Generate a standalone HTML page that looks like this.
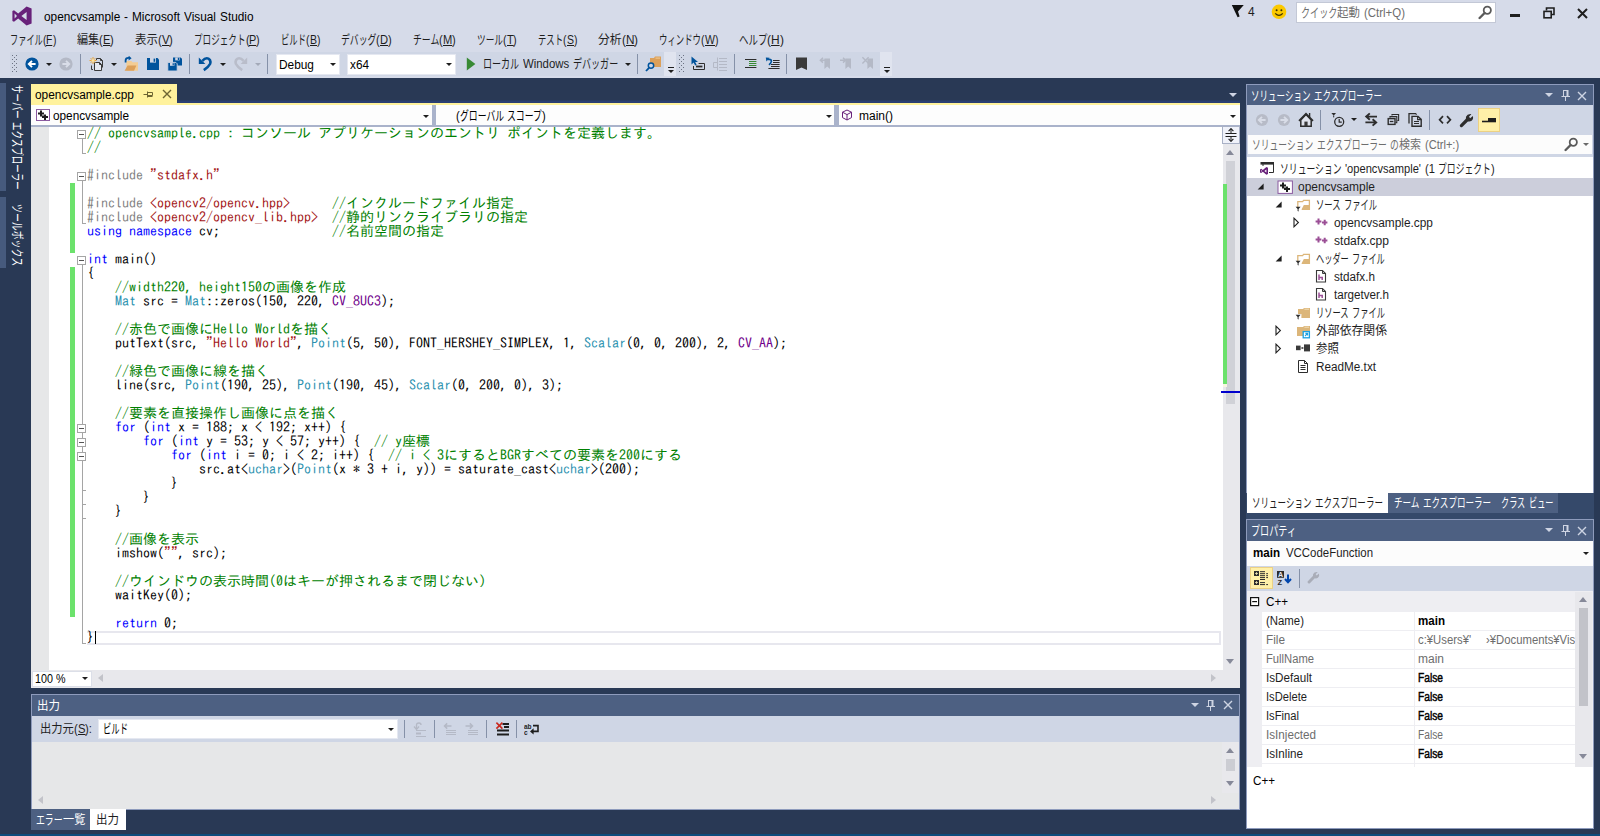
<!DOCTYPE html>
<html lang="ja">
<head>
<meta charset="utf-8">
<title>opencvsample - Microsoft Visual Studio</title>
<style>
*{box-sizing:border-box;margin:0;padding:0}
html,body{width:1600px;height:836px;overflow:hidden}
body{position:relative;background:#d6dbe9;font-family:"Liberation Sans","Noto Sans CJK JP",sans-serif;font-size:12px;color:#1e1e1e}
.abs{position:absolute}
.t{position:absolute;white-space:nowrap;line-height:16px;height:16px}
.f{display:inline-block;white-space:pre}
.r{display:inline-block;transform-origin:0 50%;white-space:pre}
.j{position:relative;top:-.3px;font-size:108%}
.jk{position:relative;top:.3px}
u .r{text-decoration:underline;text-underline-offset:1px}
u{text-decoration:underline;text-underline-offset:1px}
#dark{left:0;top:78px;width:1600px;height:758px;background:#293955}
/* code */
#code{left:87px;top:126px;font-family:"IPAGothic","Liberation Mono",monospace;font-size:14px;line-height:14px;color:#000;white-space:pre}
#code div{height:14px}
.c{color:#008000}.k{color:#0000ff}.s{color:#a31515}.p{color:#808080}.y{color:#2b91af}.m{color:#6f008a}
.hd{background:#4d6082;color:#fff;border:1px solid #8e9bbc;border-bottom:none}
.tri{position:absolute;width:0;height:0;border-left:4px solid transparent;border-right:4px solid transparent;border-top:4px solid #1e1e1e}
.combo{position:absolute;background:#fff;border:1px solid #e5e8f1}
</style>
</head>
<body>
<div id="dark" class="abs"></div>

<!-- TITLE BAR -->
<div id="titlebar">
<svg class="abs" style="left:12px;top:6px" width="20" height="20" viewBox="0 0 20 20"><path d="M14.6 0.4L19.6 2.6V17.4L14.6 19.6L6.2 12.6L2 15.8L0.4 15V5L2 4.2L6.2 7.4Z M14.6 6L9.4 10L14.6 14Z M2.6 7.6V12.4L5 10Z" fill="#68217a" fill-rule="evenodd"/></svg>
<div class="t" style="left:44px;top:9px;font-size:12px;color:#000"><span class="f"><span class="r" style="transform:scaleX(0.985);margin-right:-1.19px">opencvsample</span><span class="r" style="transform:scaleX(1.155);margin-right:0.52px"> </span><span class="r" style="transform:scaleX(0.985);margin-right:-0.06px">-</span><span class="r" style="transform:scaleX(1.155);margin-right:0.52px"> </span><span class="r" style="transform:scaleX(0.985);margin-right:-0.75px">Microsoft</span><span class="r" style="transform:scaleX(1.155);margin-right:0.52px"> </span><span class="r" style="transform:scaleX(0.985);margin-right:-0.50px">Visual</span><span class="r" style="transform:scaleX(1.155);margin-right:0.52px"> </span><span class="r" style="transform:scaleX(0.985);margin-right:-0.52px">Studio</span></span></div>
<svg class="abs" style="left:1231px;top:4px" width="14" height="14" viewBox="0 0 14 14"><path d="M0.8 1H12.8L7 7.4L8.6 12.4L6.6 13.2Z" fill="#111"/></svg>
<div class="t" style="left:1248px;top:4px;color:#1e1e1e">4</div>
<svg class="abs" style="left:1271px;top:4px" width="16" height="16" viewBox="0 0 16 16"><circle cx="8" cy="7.8" r="7.3" fill="#fbc900"/><circle cx="5.6" cy="6.2" r="1" fill="#3b3000"/><circle cx="10.4" cy="6.2" r="1" fill="#3b3000"/><path d="M4.2 9.4Q8 13.4 11.8 9.4" fill="none" stroke="#3b3000" stroke-width="1.2"/></svg>
<div class="abs" style="left:1296px;top:2px;width:200px;height:21px;background:#fff;border:1px solid #c3c8d6"></div>
<div class="t" style="left:1301px;top:5px;color:#6d6d6d"><span class="f"><span class="r j" style="transform:scaleX(0.701);margin-right:-15.49px">クイック</span><span class="r jk" style="transform:scaleX(0.954);margin-right:-1.10px">起動</span><span class="r" style="transform:scaleX(1.120);margin-right:0.40px"> </span><span class="r" style="transform:scaleX(0.954);margin-right:-1.97px">(Ctrl+Q)</span></span></div>
<svg class="abs" style="left:1478px;top:5px" width="15" height="15" viewBox="0 0 15 15"><circle cx="9.3" cy="5.3" r="3.6" fill="none" stroke="#5a5a5a" stroke-width="1.8"/><path d="M6.6 8L1.6 13" stroke="#5a5a5a" stroke-width="2.4" stroke-linecap="round"/></svg>
<div class="abs" style="left:1510px;top:14px;width:10px;height:3px;background:#1e1e1e"></div>
<svg class="abs" style="left:1543px;top:7px" width="12" height="12" viewBox="0 0 12 12"><path d="M3.5 3.5V1H11V7.5H8.5" fill="none" stroke="#1e1e1e" stroke-width="1.6"/><rect x="1" y="4.4" width="7.2" height="6.4" fill="none" stroke="#1e1e1e" stroke-width="1.6"/></svg>
<svg class="abs" style="left:1577px;top:8px" width="11" height="11" viewBox="0 0 11 11"><path d="M1 1L10 10M10 1L1 10" stroke="#1e1e1e" stroke-width="2" fill="none"/></svg>
</div>
<!-- MENU -->
<div id="menu" style="font-size:12px">
<div class="t" style="left:10px;top:32px"><span class="f"><span class="r j" style="transform:scaleX(0.633);margin-right:-19.03px">ファイル</span><span class="r" style="transform:scaleX(0.861);margin-right:-0.55px">(</span><u><span class="r" style="transform:scaleX(0.861);margin-right:-1.02px">F</span></u><span class="r" style="transform:scaleX(0.861);margin-right:-0.55px">)</span></span></div>
<div class="t" style="left:77px;top:32px"><span class="f"><span class="r jk" style="transform:scaleX(0.924);margin-right:-1.82px">編集</span><span class="r" style="transform:scaleX(0.924);margin-right:-0.30px">(</span><u><span class="r" style="transform:scaleX(0.924);margin-right:-0.61px">E</span></u><span class="r" style="transform:scaleX(0.924);margin-right:-0.30px">)</span></span></div>
<div class="t" style="left:135px;top:32px"><span class="f"><span class="r jk" style="transform:scaleX(0.949);margin-right:-1.22px">表示</span><span class="r" style="transform:scaleX(0.949);margin-right:-0.20px">(</span><u><span class="r" style="transform:scaleX(0.949);margin-right:-0.41px">V</span></u><span class="r" style="transform:scaleX(0.949);margin-right:-0.20px">)</span></span></div>
<div class="t" style="left:194px;top:32px"><span class="f"><span class="r j" style="transform:scaleX(0.663);margin-right:-26.18px">プロジェクト</span><span class="r" style="transform:scaleX(0.903);margin-right:-0.39px">(</span><u><span class="r" style="transform:scaleX(0.903);margin-right:-0.78px">P</span></u><span class="r" style="transform:scaleX(0.903);margin-right:-0.39px">)</span></span></div>
<div class="t" style="left:281px;top:32px"><span class="f"><span class="r j" style="transform:scaleX(0.643);margin-right:-13.87px">ビルド</span><span class="r" style="transform:scaleX(0.875);margin-right:-0.50px">(</span><u><span class="r" style="transform:scaleX(0.875);margin-right:-1.00px">B</span></u><span class="r" style="transform:scaleX(0.875);margin-right:-0.50px">)</span></span></div>
<div class="t" style="left:341px;top:32px"><span class="f"><span class="r j" style="transform:scaleX(0.685);margin-right:-16.35px">デバッグ</span><span class="r" style="transform:scaleX(0.932);margin-right:-0.27px">(</span><u><span class="r" style="transform:scaleX(0.932);margin-right:-0.59px">D</span></u><span class="r" style="transform:scaleX(0.932);margin-right:-0.27px">)</span></span></div>
<div class="t" style="left:413px;top:32px"><span class="f"><span class="r j" style="transform:scaleX(0.683);margin-right:-12.21px">チーム</span><span class="r" style="transform:scaleX(0.929);margin-right:-0.28px">(</span><u><span class="r" style="transform:scaleX(0.929);margin-right:-0.71px">M</span></u><span class="r" style="transform:scaleX(0.929);margin-right:-0.28px">)</span></span></div>
<div class="t" style="left:477px;top:32px"><span class="f"><span class="r j" style="transform:scaleX(0.670);margin-right:-12.84px">ツール</span><span class="r" style="transform:scaleX(0.911);margin-right:-0.35px">(</span><u><span class="r" style="transform:scaleX(0.911);margin-right:-0.65px">T</span></u><span class="r" style="transform:scaleX(0.911);margin-right:-0.35px">)</span></span></div>
<div class="t" style="left:538px;top:32px"><span class="f"><span class="r j" style="transform:scaleX(0.643);margin-right:-13.87px">テスト</span><span class="r" style="transform:scaleX(0.875);margin-right:-0.50px">(</span><u><span class="r" style="transform:scaleX(0.875);margin-right:-1.00px">S</span></u><span class="r" style="transform:scaleX(0.875);margin-right:-0.50px">)</span></span></div>
<div class="t" style="left:598px;top:32px"><span class="f"><span class="r jk" style="transform:scaleX(0.983);margin-right:-0.41px">分析</span><span class="r" style="transform:scaleX(0.983);margin-right:-0.07px">(</span><u><span class="r" style="transform:scaleX(0.983);margin-right:-0.15px">N</span></u><span class="r" style="transform:scaleX(0.983);margin-right:-0.07px">)</span></span></div>
<div class="t" style="left:659px;top:32px"><span class="f"><span class="r j" style="transform:scaleX(0.648);margin-right:-22.81px">ウィンドウ</span><span class="r" style="transform:scaleX(0.882);margin-right:-0.47px">(</span><u><span class="r" style="transform:scaleX(0.882);margin-right:-1.34px">W</span></u><span class="r" style="transform:scaleX(0.882);margin-right:-0.47px">)</span></span></div>
<div class="t" style="left:739px;top:32px"><span class="f"><span class="r j" style="transform:scaleX(0.731);margin-right:-10.45px">ヘルプ</span><span class="r" style="transform:scaleX(0.995);margin-right:-0.02px">(</span><u><span class="r" style="transform:scaleX(0.995);margin-right:-0.04px">H</span></u><span class="r" style="transform:scaleX(0.995);margin-right:-0.02px">)</span></span></div>
</div>
<!-- TOOLBAR -->
<div id="toolbar">
<div class="abs" style="left:10px;top:52px;width:654px;height:24px;background:#cfd6e5"></div>
<div class="abs" style="left:676px;top:52px;width:204px;height:24px;background:#cfd6e5"></div>
<svg class="abs" style="left:12px;top:55px" width="6" height="18" viewBox="0 0 6 18"><g fill="#6b7282"><rect x="0" y="0" width="1" height="1"/><rect x="2" y="2" width="1" height="1"/><rect x="4" y="0" width="1" height="1"/><rect x="0" y="4" width="1" height="1"/><rect x="2" y="6" width="1" height="1"/><rect x="4" y="4" width="1" height="1"/><rect x="0" y="8" width="1" height="1"/><rect x="2" y="10" width="1" height="1"/><rect x="4" y="8" width="1" height="1"/><rect x="0" y="12" width="1" height="1"/><rect x="2" y="14" width="1" height="1"/><rect x="4" y="12" width="1" height="1"/><rect x="0" y="16" width="1" height="1"/><rect x="4" y="16" width="1" height="1"/></g></svg>
<!-- back / forward -->
<svg class="abs" style="left:25px;top:57px" width="14" height="14" viewBox="0 0 14 14"><circle cx="7" cy="7" r="6.6" fill="#00539c"/><path d="M10.6 7H4.4M7 3.8L3.8 7L7 10.2" fill="none" stroke="#fff" stroke-width="1.9"/></svg>
<div class="tri" style="left:46px;top:63px;border-width:3px 3px 0 3px;border-style:solid;border-color:#1e1e1e transparent transparent transparent"></div>
<svg class="abs" style="left:59px;top:57px" width="14" height="14" viewBox="0 0 14 14"><circle cx="7" cy="7" r="6.6" fill="#b4b9c6"/><path d="M3.4 7H9.6M7 3.8L10.2 7L7 10.2" fill="none" stroke="#d9dde8" stroke-width="1.9"/></svg>
<div class="abs" style="left:80px;top:54px;width:1px;height:20px;background:#8591a8"></div>
<!-- new project -->
<svg class="abs" style="left:89px;top:55px" width="16" height="18" viewBox="0 0 16 18"><path d="M7.5 5V3.5H11.5L13.5 5.5V12.5" fill="none" stroke="#3a3a3a"/><path d="M11.5 3.5V5.5H13.5" fill="none" stroke="#3a3a3a"/><path d="M5.5 7.5H10.5L12.5 9.5V15.5H5.5Z" fill="#e6e9f2" stroke="#3a3a3a"/><path d="M10.5 7.5V9.5H12.5" fill="none" stroke="#3a3a3a"/><path d="M2.5 10.5V14.5H4" fill="none" stroke="#3a3a3a"/><path d="M4 2V9M0.5 5.5H7.5M1.6 3.1L6.4 7.9M6.4 3.1L1.6 7.9" stroke="#e8a33a" stroke-width="1"/><circle cx="4" cy="5.5" r="1.5" fill="#fbe3a0"/></svg>
<div class="tri" style="left:111px;top:63px;border-width:3px 3px 0 3px;border-style:solid;border-color:#1e1e1e transparent transparent transparent"></div>
<!-- open -->
<svg class="abs" style="left:123px;top:56px" width="16" height="16" viewBox="0 0 16 16"><path d="M3.4 5H8.4L9.4 6.2H15V14.8H3.4Z" fill="#f3cd95"/><path d="M1.6 14.8L4.6 9.4H13.4L11 14.8Z" fill="#dca05a"/><path d="M2.6 6.4V4.6Q2.6 1.8 5.4 1.8H6.4" fill="none" stroke="#00539c" stroke-width="1.8"/><path d="M5.6 -0.4L8.6 2.2L5.6 4.6Z" fill="#00539c"/></svg>
<!-- save -->
<svg class="abs" style="left:146px;top:57px" width="14" height="14" viewBox="0 0 14 14"><path d="M1 1H11.5L13 2.5V13H1Z" fill="#00539c"/><rect x="4" y="1" width="6" height="4.6" fill="#cfd6e5"/><rect x="7.6" y="1.6" width="1.6" height="3.2" fill="#00539c"/></svg>
<!-- save all -->
<svg class="abs" style="left:167px;top:56px" width="16" height="16" viewBox="0 0 16 16"><path d="M6 1.4H13.6L15 2.8V9.6H6Z" fill="#00539c"/><rect x="8.2" y="1.4" width="4.4" height="3" fill="#cfd6e5"/><rect x="10.8" y="1.8" width="1.2" height="2.2" fill="#00539c"/><path d="M0.8 6.4H8.8L10.2 7.8V15H0.8Z" fill="#00539c" stroke="#cfd6e5" stroke-width=".9"/><rect x="3" y="6.8" width="4.4" height="3" fill="#cfd6e5"/><rect x="5.6" y="7.2" width="1.2" height="2.2" fill="#00539c"/></svg>
<div class="abs" style="left:189px;top:54px;width:1px;height:20px;background:#8591a8"></div>
<!-- undo -->
<svg class="abs" style="left:197px;top:56px" width="16" height="16" viewBox="0 0 16 16"><path d="M5.4 4.8Q8.4 1.4 11.4 2.6Q14.4 4.2 13 8Q11.4 11.2 6.8 14.2" fill="none" stroke="#00539c" stroke-width="2.6"/><path d="M1.8 1.4V8H8.4Z" fill="#00539c"/></svg>
<div class="tri" style="left:220px;top:63px;border-width:3px 3px 0 3px;border-style:solid;border-color:#1e1e1e transparent transparent transparent"></div>
<!-- redo -->
<svg class="abs" style="left:233px;top:56px" width="16" height="16" viewBox="0 0 16 16"><path d="M10.6 4.8Q7.6 1.4 4.6 2.6Q1.6 4.2 3 8Q4.6 11.2 9.2 14.2" fill="none" stroke="#b9bdca" stroke-width="2.6"/><path d="M14.2 1.4V8H7.6Z" fill="#b9bdca"/></svg>
<div class="tri" style="left:255px;top:63px;border-width:3px 3px 0 3px;border-style:solid;border-color:#a3a9b8 transparent transparent transparent"></div>
<div class="abs" style="left:267px;top:54px;width:1px;height:20px;background:#8591a8"></div>
<!-- combos -->
<div class="combo" style="left:276px;top:54px;width:64px;height:21px"></div>
<div class="t" style="left:279px;top:57px;color:#000"><span class="f"><span class="r" style="transform:scaleX(0.989);margin-right:-0.37px">Debug</span></span></div>
<div class="tri" style="left:330px;top:63px;border-width:3px 3px 0 3px;border-style:solid;border-color:#1e1e1e transparent transparent transparent"></div>
<div class="combo" style="left:347px;top:54px;width:109px;height:21px"></div>
<div class="t" style="left:350px;top:57px;color:#000"><span class="f"><span class="r" style="transform:scaleX(0.981);margin-right:-0.36px">x64</span></span></div>
<div class="tri" style="left:446px;top:63px;border-width:3px 3px 0 3px;border-style:solid;border-color:#1e1e1e transparent transparent transparent"></div>
<!-- start -->
<svg class="abs" style="left:466px;top:57px" width="10" height="14" viewBox="0 0 10 14"><path d="M0.8 0.6L9.4 7L0.8 13.4Z" fill="#388a34"/></svg>
<div class="t" style="left:483px;top:56px;color:#1e1e1e"><span class="f"><span class="r j" style="transform:scaleX(0.698);margin-right:-15.67px">ローカル</span><span class="r" style="transform:scaleX(1.114);margin-right:0.38px"> </span><span class="r" style="transform:scaleX(0.949);margin-right:-2.46px">Windows</span><span class="r" style="transform:scaleX(1.114);margin-right:0.38px"> </span><span class="r j" style="transform:scaleX(0.698);margin-right:-19.59px">デバッガー</span></span></div>
<div class="tri" style="left:625px;top:63px;border-width:3px 3px 0 3px;border-style:solid;border-color:#1e1e1e transparent transparent transparent"></div>
<div class="abs" style="left:637px;top:54px;width:1px;height:20px;background:#8591a8"></div>
<!-- find in files -->
<svg class="abs" style="left:645px;top:55px" width="17" height="18" viewBox="0 0 17 18"><path d="M5 3H9L10 1.6H16V12H5Z" fill="#dca05a"/><rect x="10.5" y="2.6" width="4.5" height="1" fill="#f3cd95"/><circle cx="6" cy="10.6" r="2.7" fill="#cfd6e5" stroke="#00539c" stroke-width="1.5"/><path d="M4 12.8L1 16" stroke="#00539c" stroke-width="1.8"/></svg>
<!-- overflow 1 -->
<div class="abs" style="left:664px;top:52px;width:12px;height:24px;background:#e0e4ef"></div>
<div class="abs" style="left:668px;top:66.5px;width:6px;height:1.6px;background:#1e1e1e"></div>
<div class="tri" style="left:668px;top:70px;border-width:3px 3px 0 3px;border-style:solid;border-color:#1e1e1e transparent transparent transparent"></div>
<!-- toolbar 2 -->
<svg class="abs" style="left:679px;top:55px" width="6" height="18" viewBox="0 0 6 18"><g fill="#6b7282"><rect x="0" y="0" width="1" height="1"/><rect x="2" y="2" width="1" height="1"/><rect x="4" y="0" width="1" height="1"/><rect x="0" y="4" width="1" height="1"/><rect x="2" y="6" width="1" height="1"/><rect x="4" y="4" width="1" height="1"/><rect x="0" y="8" width="1" height="1"/><rect x="2" y="10" width="1" height="1"/><rect x="4" y="8" width="1" height="1"/><rect x="0" y="12" width="1" height="1"/><rect x="2" y="14" width="1" height="1"/><rect x="4" y="12" width="1" height="1"/><rect x="0" y="16" width="1" height="1"/><rect x="4" y="16" width="1" height="1"/></g></svg>
<svg class="abs" style="left:690px;top:56px" width="16" height="16" viewBox="0 0 16 16"><path d="M1.5 0.5V8.6L3.6 6.6L5.2 9.6L6.6 8.8L5.2 6H8Z" fill="#00539c"/><path d="M3.5 10V13.5H14.5V7.5H8.6" fill="none" stroke="#2d2d2d"/><rect x="6" y="9.6" width="6.4" height="1.8" fill="#2d2d2d"/></svg>
<svg class="abs" style="left:712px;top:56px" width="16" height="16" viewBox="0 0 16 16"><g fill="none" stroke="#b4b9c6"><path d="M5.5 6.5H1.5V11.5H5.5M5.5 1.5V14.5"/><path d="M7 2.5H15M7 5.5H15M7 8.5H15M7 11.5H15M7 14.5H15"/></g></svg>
<div class="abs" style="left:734px;top:54px;width:1px;height:20px;background:#8591a8"></div>
<svg class="abs" style="left:744px;top:57px" width="14" height="14" viewBox="0 0 14 14"><path d="M1 2.5H12.4M1 10.5H12.4" stroke="#2d2d2d" stroke-width="1.1"/><path d="M5 4.5H12.4M5 6.5H12.4M5 8.5H12.4" stroke="#388a34" stroke-width="1.1"/></svg>
<svg class="abs" style="left:765px;top:55px" width="16" height="18" viewBox="0 0 16 18"><path d="M8 5.5H14.6M8 7.5H14.6M6 9.5H14.6M6 11.5H14.6M3.4 13.5H14.6" stroke="#2d2d2d" stroke-width="1.1"/><path d="M2.6 4.4H4.4Q6.4 4.4 6.4 6.2Q6.4 7.6 4 9.8" fill="none" stroke="#00539c" stroke-width="1.6"/><path d="M0.8 2.4L4.6 2.8L1.4 6.4Z" fill="#00539c"/></svg>
<div class="abs" style="left:786px;top:54px;width:1px;height:20px;background:#8591a8"></div>
<svg class="abs" style="left:796px;top:57px" width="12" height="14" viewBox="0 0 12 14"><path d="M0 0.4H11V13L5.5 10.4L0 13Z" fill="#3a3a3a"/></svg>
<svg class="abs" style="left:818px;top:56px" width="14" height="15" viewBox="0 0 14 15"><path d="M6.4 2.6H12V13L9.2 10.6L6.4 13Z" fill="#b4b9c6"/><path d="M8 4.2H3M5 1.8L2.4 4.2L5 6.6" fill="none" stroke="#b4b9c6" stroke-width="1.5"/></svg>
<svg class="abs" style="left:839px;top:56px" width="14" height="15" viewBox="0 0 14 15"><path d="M6.4 2.6H12V13L9.2 10.6L6.4 13Z" fill="#b4b9c6"/><path d="M1 4.2H6M4 1.8L6.6 4.2L4 6.6" fill="none" stroke="#b4b9c6" stroke-width="1.5"/></svg>
<svg class="abs" style="left:861px;top:56px" width="14" height="15" viewBox="0 0 14 15"><path d="M6.4 2.6H12V13L9.2 10.6L6.4 13Z" fill="#b4b9c6"/><path d="M1.4 1.2L7.6 7.4M7.6 1.2L1.4 7.4" fill="none" stroke="#b4b9c6" stroke-width="1.4"/></svg>
<div class="abs" style="left:880px;top:52px;width:12px;height:24px;background:#e0e4ef"></div>
<div class="abs" style="left:884px;top:66.5px;width:6px;height:1.6px;background:#1e1e1e"></div>
<div class="tri" style="left:884px;top:70px;border-width:3px 3px 0 3px;border-style:solid;border-color:#1e1e1e transparent transparent transparent"></div>
</div>
<!-- LEFT STRIP -->
<div id="leftstrip">
<div class="abs" style="left:0;top:83px;width:6px;height:108px;background:#465a7d"></div>
<div class="abs" style="left:0;top:197px;width:6px;height:71px;background:#465a7d"></div>
<div class="t" style="left:25px;top:85px;color:#fff;transform-origin:0 0;transform:rotate(90deg)"><span class="f"><span class="r j" style="transform:scaleX(0.655);margin-right:-17.83px">サーバー</span><span class="r" style="transform:scaleX(1.046);margin-right:0.16px"> </span><span class="r j" style="transform:scaleX(0.655);margin-right:-35.61px">エクスプローラー</span></span></div>
<div class="t" style="left:25px;top:204px;color:#fff;transform-origin:0 0;transform:rotate(90deg)"><span class="f"><span class="r j" style="transform:scaleX(0.687);margin-right:-28.30px">ツールボックス</span></span></div>
</div>
<div id="editor">
<!-- doc tab -->
<div class="abs" style="left:31px;top:100.2px;width:1209px;height:3px;background:linear-gradient(#293955,#2a3f72 40%)"></div>
<div class="abs" style="left:31px;top:84px;width:146px;height:20px;background:#fff29d"></div>
<div class="t" style="left:35px;top:87px;color:#000"><span class="f"><span class="r" style="transform:scaleX(0.989);margin-right:-1.06px">opencvsample.cpp</span></span></div>
<svg class="abs" style="left:143px;top:90px" width="10" height="10" viewBox="0 0 10 10"><path d="M0.5 4.5H4 M4.5 1.5V7.5 M4.5 2.5H9.5V5.5H4.5 M4.5 6.5H9.5" fill="none" stroke="#6d6532" stroke-width="1"/></svg>
<svg class="abs" style="left:162px;top:89px" width="10" height="10" viewBox="0 0 10 10"><path d="M1 1L9 9M9 1L1 9" fill="none" stroke="#6d6532" stroke-width="1.4"/></svg>
<div class="abs" style="left:31px;top:103px;width:1209px;height:2.4px;background:#fff29d"></div>
<div class="tri" style="left:1229px;top:93px;border-top-color:#ced4e3"></div>
<!-- nav bar -->
<div class="abs" style="left:31px;top:105.4px;width:1209px;height:21.4px;background:#aab3cb"></div>
<div class="abs" style="left:31px;top:105.4px;width:400.8px;height:19.9px;background:#fdfdfd"></div>
<div class="abs" style="left:435.8px;top:105.4px;width:398.7px;height:19.9px;background:#fdfdfd"></div>
<div class="abs" style="left:838.5px;top:105.4px;width:401.5px;height:19.9px;background:#fdfdfd"></div>
<svg class="abs" style="left:36px;top:109px" width="14" height="12" viewBox="0 0 14 12"><rect x=".5" y=".5" width="13" height="11" fill="#fff" stroke="#8a5aa0"/><path d="M2 3.4h2v-2h2v2h2v2h-2v2h-2v-2h-2z M6 6.4h2v-1h2v1.6h2v2h-2v2h-2v-2h-2z" fill="#1e1e1e"/></svg>
<div class="t" style="left:53px;top:108px;color:#000"><span class="f"><span class="r" style="transform:scaleX(0.982);margin-right:-1.39px">opencvsample</span></span></div>
<div class="tri" style="left:423px;top:115px;border-width:3px 3px 0 3px;border-style:solid;border-color:#1e1e1e transparent transparent transparent"></div>
<div class="t" style="left:456px;top:108px;color:#000"><span class="f"><span class="r" style="transform:scaleX(0.929);margin-right:-0.29px">(</span><span class="r j" style="transform:scaleX(0.682);margin-right:-20.54px">グローバル</span><span class="r" style="transform:scaleX(1.090);margin-right:0.30px"> </span><span class="r j" style="transform:scaleX(0.682);margin-right:-16.22px">スコープ</span><span class="r" style="transform:scaleX(0.929);margin-right:-0.29px">)</span></span></div>
<div class="tri" style="left:826px;top:115px;border-width:3px 3px 0 3px;border-style:solid;border-color:#1e1e1e transparent transparent transparent"></div>
<svg class="abs" style="left:841px;top:109px" width="12" height="12" viewBox="0 0 12 12"><path d="M6 1L10.5 3.2V8.6L6 11L1.5 8.6V3.2Z M1.5 3.2L6 5.6L10.5 3.2 M6 5.6V11" fill="none" stroke="#68217a" stroke-width="1"/></svg>
<div class="t" style="left:859px;top:108px;color:#000"><span class="f"><span class="r" style="transform:scaleX(1.000);margin-right:-0.02px">main()</span></span></div>
<div class="tri" style="left:1230px;top:115px;border-width:3px 3px 0 3px;border-style:solid;border-color:#1e1e1e transparent transparent transparent"></div>
<!-- text area -->
<div class="abs" style="left:31px;top:126.8px;width:1192px;height:543.2px;background:#fff"></div>
<div class="abs" style="left:31px;top:126.8px;width:18px;height:543.2px;background:#e6e7e8"></div>
<!-- change bars -->
<div class="abs" style="left:70px;top:182.5px;width:4.6px;height:70px;background:#6ce26c"></div>
<div class="abs" style="left:70px;top:266.7px;width:4.6px;height:350.5px;background:#6ce26c"></div>
<!-- current line -->
<div class="abs" style="left:87px;top:630.6px;width:1134px;height:14.4px;border-top:2px solid #e7e7ee;border-bottom:2px solid #e7e7ee;border-right:2px solid #e7e7ee"></div>
<div id="outl"><div class="abs" style="left:82px;top:139px;width:1px;height:15px;background:#a5a5a5"></div><div class="abs" style="left:82px;top:153px;width:4px;height:1px;background:#a5a5a5"></div><div class="abs" style="left:77px;top:130px;width:9px;height:9px;background:#fff;border:1px solid #a5a5a5"></div><div class="abs" style="left:79px;top:134px;width:5px;height:1px;background:#555"></div><div class="abs" style="left:82px;top:181px;width:1px;height:43px;background:#a5a5a5"></div><div class="abs" style="left:82px;top:223px;width:4px;height:1px;background:#a5a5a5"></div><div class="abs" style="left:77px;top:172px;width:9px;height:9px;background:#fff;border:1px solid #a5a5a5"></div><div class="abs" style="left:79px;top:176px;width:5px;height:1px;background:#555"></div><div class="abs" style="left:82px;top:265px;width:1px;height:379px;background:#a5a5a5"></div><div class="abs" style="left:82px;top:643px;width:4px;height:1px;background:#a5a5a5"></div><div class="abs" style="left:77px;top:256px;width:9px;height:9px;background:#fff;border:1px solid #a5a5a5"></div><div class="abs" style="left:79px;top:260px;width:5px;height:1px;background:#555"></div><div class="abs" style="left:77px;top:424px;width:9px;height:9px;background:#fff;border:1px solid #a5a5a5"></div><div class="abs" style="left:79px;top:428px;width:5px;height:1px;background:#555"></div><div class="abs" style="left:77px;top:438px;width:9px;height:9px;background:#fff;border:1px solid #a5a5a5"></div><div class="abs" style="left:79px;top:442px;width:5px;height:1px;background:#555"></div><div class="abs" style="left:77px;top:452px;width:9px;height:9px;background:#fff;border:1px solid #a5a5a5"></div><div class="abs" style="left:79px;top:456px;width:5px;height:1px;background:#555"></div><div class="abs" style="left:82px;top:490px;width:4px;height:1px;background:#a5a5a5"></div><div class="abs" style="left:82px;top:504px;width:4px;height:1px;background:#a5a5a5"></div><div class="abs" style="left:82px;top:518px;width:4px;height:1px;background:#a5a5a5"></div></div>
<div id="code" class="abs"><div><span class="c">// opencvsample.cpp : コンソール アプリケーションのエントリ ポイントを定義します。</span></div><div><span class="c">//</span></div><div></div><div><span class="p">#include</span> <span class="s">"stdafx.h"</span></div><div></div><div><span class="p">#include</span> <span class="s">&lt;opencv2/opencv.hpp&gt;</span>      <span class="c">//インクルードファイル指定</span></div><div><span class="p">#include</span> <span class="s">&lt;opencv2/opencv_lib.hpp&gt;</span>  <span class="c">//静的リンクライブラリの指定</span></div><div><span class="k">using</span> <span class="k">namespace</span> cv;                <span class="c">//名前空間の指定</span></div><div></div><div><span class="k">int</span> main()</div><div>{</div><div>    <span class="c">//width220, height150の画像を作成</span></div><div>    <span class="y">Mat</span> src = <span class="y">Mat</span>::zeros(150, 220, <span class="m">CV_8UC3</span>);</div><div></div><div>    <span class="c">//赤色で画像にHello Worldを描く</span></div><div>    putText(src, <span class="s">"Hello World"</span>, <span class="y">Point</span>(5, 50), FONT_HERSHEY_SIMPLEX, 1, <span class="y">Scalar</span>(0, 0, 200), 2, <span class="m">CV_AA</span>);</div><div></div><div>    <span class="c">//緑色で画像に線を描く</span></div><div>    line(src, <span class="y">Point</span>(190, 25), <span class="y">Point</span>(190, 45), <span class="y">Scalar</span>(0, 200, 0), 3);</div><div></div><div>    <span class="c">//要素を直接操作し画像に点を描く</span></div><div>    <span class="k">for</span> (<span class="k">int</span> x = 188; x &lt; 192; x++) {</div><div>        <span class="k">for</span> (<span class="k">int</span> y = 53; y &lt; 57; y++) {  <span class="c">// y座標</span></div><div>            <span class="k">for</span> (<span class="k">int</span> i = 0; i &lt; 2; i++) {  <span class="c">// i &lt; 3にするとBGRすべての要素を200にする</span></div><div>                src.at&lt;<span class="y">uchar</span>&gt;(<span class="y">Point</span>(x * 3 + i, y)) = saturate_cast&lt;<span class="y">uchar</span>&gt;(200);</div><div>            }</div><div>        }</div><div>    }</div><div></div><div>    <span class="c">//画像を表示</span></div><div>    imshow(<span class="s">""</span>, src);</div><div></div><div>    <span class="c">//ウインドウの表示時間(0はキーが押されるまで閉じない)</span></div><div>    waitKey(0);</div><div></div><div>    <span class="k">return</span> 0;</div><div>}</div></div>
<div class="abs" style="left:95px;top:631px;width:1px;height:13px;background:#000"></div>
<!-- v scrollbar -->
<div class="abs" style="left:1223px;top:126px;width:17px;height:544px;background:#e8e8ec"></div>
<div id="vsb">
<div class="abs" style="left:1222px;top:126px;width:18px;height:18px;background:#f0f2fa;border:1px solid #a9b1c6"></div>
<svg class="abs" style="left:1225px;top:128px" width="12" height="14" viewBox="0 0 12 14"><path d="M0.5 5.5H11.5M0.5 8.5H11.5" stroke="#1e1e1e" stroke-width="1"/><path d="M6 1V5M6 9V13" stroke="#1e1e1e" stroke-width="1"/><path d="M3.6 3.2L6 0.6L8.4 3.2M3.6 10.8L6 13.4L8.4 10.8" fill="none" stroke="#1e1e1e" stroke-width="1.1"/></svg>
<div class="tri" style="left:1226px;top:150px;border-width:0 4.5px 5px 4.5px;border-style:solid;border-color:transparent transparent #868999 transparent"></div>
<div class="abs" style="left:1226px;top:161px;width:9px;height:243px;background:#d0d1d7"></div>
<div class="abs" style="left:1223px;top:184px;width:4px;height:200px;background:#6ce26c"></div>
<div class="abs" style="left:1223px;top:384px;width:4px;height:3px;background:#f6f6e0"></div>
<div class="abs" style="left:1221px;top:391px;width:19px;height:2px;background:#0000cd"></div>
<div class="tri" style="left:1226px;top:659px;border-width:5px 4.5px 0 4.5px;border-style:solid;border-color:#868999 transparent transparent transparent"></div>
</div>
<!-- h scrollbar -->
<div class="abs" style="left:31px;top:670px;width:1209px;height:18px;background:#e8e8ec"></div>
<div id="hsb">
<div class="abs" style="left:32px;top:671px;width:60px;height:16px;background:#fff;border:1px solid #dcdfe8"></div>
<div class="t" style="left:35px;top:671px;color:#000"><span class="f"><span class="r" style="transform:scaleX(0.895);margin-right:-2.10px">100</span><span class="r" style="transform:scaleX(1.051);margin-right:0.17px"> </span><span class="r" style="transform:scaleX(0.895);margin-right:-1.12px">%</span></span></div>
<div class="tri" style="left:82px;top:677px;border-width:3px 3px 0 3px;border-style:solid;border-color:#1e1e1e transparent transparent transparent"></div>
<div class="tri" style="left:98px;top:674px;border-width:4.5px 5px 4.5px 0;border-style:solid;border-color:transparent #c2c3c9 transparent transparent"></div>
<div class="tri" style="left:1211px;top:674px;border-width:4.5px 0 4.5px 5px;border-style:solid;border-color:transparent transparent transparent #c2c3c9"></div>
</div>
</div>
<!-- OUTPUT -->
<div id="output">
<div class="abs" style="left:31px;top:694px;width:1209px;height:116px;background:#e6e7e8;border:1px solid #8e9bbc"></div>
<div class="abs" style="left:32px;top:695px;width:1207px;height:21px;background:#4d6082"></div>
<div class="t" style="left:37px;top:698px;color:#fff"><span class="f"><span class="r jk" style="transform:scaleX(0.958);margin-right:-1.02px">出力</span></span></div>
<div class="tri" style="left:1191px;top:703px;border-width:4px 4px 0 4px;border-style:solid;border-color:#ced4e3 transparent transparent transparent"></div>
<svg class="abs" style="left:1206px;top:699px" width="10" height="12" viewBox="0 0 10 12"><path d="M2.5 1V8M2.5 1.5H7M0.5 7.5H9M4.5 8V12" fill="none" stroke="#ced4e3" stroke-width="1"/><path d="M6.5 1V8" stroke="#ced4e3" stroke-width="2"/></svg>
<svg class="abs" style="left:1223px;top:700px" width="10" height="10" viewBox="0 0 10 10"><path d="M1 1L9 9M9 1L1 9" fill="none" stroke="#ced4e3" stroke-width="1.4"/></svg>
<div class="abs" style="left:32px;top:716px;width:1207px;height:26px;background:#cfd6e5"></div>
<div class="t" style="left:40px;top:721px;color:#1e1e1e"><span class="f"><span class="r jk" style="transform:scaleX(0.939);margin-right:-2.20px">出力元</span><span class="r" style="transform:scaleX(0.939);margin-right:-0.24px">(</span><u><span class="r" style="transform:scaleX(0.939);margin-right:-0.49px">S</span></u><span class="r" style="transform:scaleX(0.939);margin-right:-0.45px">):</span></span></div>
<div class="combo" style="left:98px;top:719px;width:300px;height:20px"></div>
<div class="t" style="left:103px;top:721px;color:#000"><span class="f"><span class="r j" style="transform:scaleX(0.643);margin-right:-13.86px">ビルド</span></span></div>
<div class="tri" style="left:388px;top:728px;border-width:3px 3px 0 3px;border-style:solid;border-color:#1e1e1e transparent transparent transparent"></div>
<div class="abs" style="left:404px;top:720px;width:1px;height:18px;background:#8591a8"></div>
<svg class="abs" style="left:412px;top:721px" width="16" height="16" viewBox="0 0 16 16"><g fill="none" stroke="#b4b9c6"><path d="M4.5 8V4.5Q4.5 2 7 2Q9 2 9 4" stroke-width="1.4"/><path d="M2 5.5L4.5 8.5L7 5.5" stroke-width="1.2"/><path d="M4 9.5H14M4 15.5H14"/><path d="M4 12.5H9" stroke-width="2"/></g></svg>
<div class="abs" style="left:434px;top:720px;width:1px;height:18px;background:#8591a8"></div>
<svg class="abs" style="left:443px;top:722px" width="14" height="14" viewBox="0 0 14 14"><g fill="none" stroke="#b4b9c6"><path d="M1.5 4H8.5M4.2 1.4L1.5 4L4.2 6.6" stroke-width="1.5"/><path d="M3 8.5H13M3 10.5H13M3 12.5H13"/></g></svg>
<svg class="abs" style="left:465px;top:722px" width="14" height="14" viewBox="0 0 14 14"><g fill="none" stroke="#b4b9c6"><path d="M0.5 4H7.5M4.8 1.4L7.5 4L4.8 6.6" stroke-width="1.5"/><path d="M3 8.5H13M3 10.5H13M3 12.5H13"/></g></svg>
<div class="abs" style="left:486px;top:720px;width:1px;height:18px;background:#8591a8"></div>
<svg class="abs" style="left:495px;top:721px" width="15" height="16" viewBox="0 0 15 16"><path d="M7.5 3H14M9 6H14M2 9.5H14M2 13.5H14" stroke="#1e1e1e" stroke-width="1.8"/><path d="M1.4 1.6L7.4 7.6M7.4 1.6L1.4 7.6" stroke="#c8281e" stroke-width="1.6"/></svg>
<div class="abs" style="left:516px;top:720px;width:1px;height:18px;background:#8591a8"></div>
<svg class="abs" style="left:524px;top:723px" width="16" height="13" viewBox="0 0 16 13"><text x="0" y="5.5" font-family="Liberation Sans, sans-serif" font-size="6.5" font-weight="bold" fill="#1e1e1e">ab</text><text x="0" y="11.5" font-family="Liberation Sans, sans-serif" font-size="6.5" font-weight="bold" fill="#1e1e1e">c</text><path d="M9 2.6H14V8.4H8" fill="none" stroke="#1e1e1e" stroke-width="1.6"/><path d="M6 8.4L9.6 5.2V11.6Z" fill="#1e1e1e"/></svg>
<!-- output scrollbars -->
<div class="abs" style="left:1222px;top:742px;width:17px;height:51px;background:#e8e8ec"></div>
<div class="tri" style="left:1226px;top:748px;border-width:0 4.5px 5px 4.5px;border-style:solid;border-color:transparent transparent #868999 transparent"></div>
<div class="abs" style="left:1226px;top:759px;width:9px;height:12px;background:#cccdd3"></div>
<div class="tri" style="left:1226px;top:781px;border-width:5px 4.5px 0 4.5px;border-style:solid;border-color:#868999 transparent transparent transparent"></div>
<div class="tri" style="left:38px;top:796px;border-width:4.5px 5px 4.5px 0;border-style:solid;border-color:transparent #c2c3c9 transparent transparent"></div>
<div class="tri" style="left:1211px;top:796px;border-width:4.5px 0 4.5px 5px;border-style:solid;border-color:transparent transparent transparent #c2c3c9"></div>
<!-- bottom tabs -->
<div class="abs" style="left:31px;top:809px;width:59px;height:20.5px;background:#4d6082"></div>
<div class="abs" style="left:0;top:834px;width:1600px;height:2px;background:#0e4c7c"></div>
<div class="t" style="left:36px;top:812px;color:#fff"><span class="f"><span class="r j" style="transform:scaleX(0.685);margin-right:-12.25px">エラー</span><span class="r jk" style="transform:scaleX(0.932);margin-right:-1.63px">一覧</span></span></div>
<div class="abs" style="left:90px;top:809px;width:36px;height:20.5px;background:#fff"></div>
<div class="t" style="left:96px;top:812px;color:#1e1e1e"><span class="f"><span class="r jk" style="transform:scaleX(0.958);margin-right:-1.02px">出力</span></span></div>
</div>
<!-- SOLUTION EXPLORER -->
<div id="solexp">
<div class="abs" style="left:1246px;top:84px;width:348px;height:409px;background:#fff;border:1px solid #8e9bbc;border-bottom:none"></div>
<div class="abs" style="left:1247px;top:85px;width:346px;height:20px;background:#4d6082"></div>
<div class="t" style="left:1251px;top:88px;color:#fff"><span class="f"><span class="r j" style="transform:scaleX(0.658);margin-right:-30.90px">ソリューション</span><span class="r" style="transform:scaleX(1.051);margin-right:0.17px"> </span><span class="r j" style="transform:scaleX(0.658);margin-right:-35.29px">エクスプローラー</span></span></div>
<div class="tri" style="left:1545px;top:93px;border-width:4px 4px 0 4px;border-style:solid;border-color:#ced4e3 transparent transparent transparent"></div>
<svg class="abs" style="left:1561px;top:89px" width="10" height="12" viewBox="0 0 10 12"><path d="M2.5 1V8M2.5 1.5H7M0.5 7.5H9M4.5 8V12" fill="none" stroke="#ced4e3" stroke-width="1"/><path d="M6.5 1V8" stroke="#ced4e3" stroke-width="2"/></svg>
<svg class="abs" style="left:1577px;top:91px" width="10" height="10" viewBox="0 0 10 10"><path d="M1 1L9 9M9 1L1 9" fill="none" stroke="#ced4e3" stroke-width="1.4"/></svg>
<!-- toolbar -->
<div class="abs" style="left:1247px;top:105px;width:346px;height:52px;background:#cfd6e5"></div>
<svg class="abs" style="left:1255px;top:113px" width="14" height="14" viewBox="0 0 14 14"><circle cx="7" cy="7" r="6.1" fill="#b7bbc7"/><path d="M10.6 7H4.4M7 3.8L3.8 7L7 10.2" fill="none" stroke="#d9dde8" stroke-width="1.9"/></svg>
<svg class="abs" style="left:1277px;top:113px" width="14" height="14" viewBox="0 0 14 14"><circle cx="7" cy="7" r="6.1" fill="#b7bbc7"/><path d="M3.4 7H9.6M7 3.8L10.2 7L7 10.2" fill="none" stroke="#d9dde8" stroke-width="1.9"/></svg>
<svg class="abs" style="left:1298px;top:112px" width="16" height="16" viewBox="0 0 16 16"><path d="M2.8 8V14.2H13.2V8L8 2.6Z" fill="#e0e3ec" stroke="#2d2d2d" stroke-width="1.5"/><path d="M1 8.8L8 1.6L15 8.8" fill="none" stroke="#2d2d2d" stroke-width="1.7"/><path d="M11.6 1V5" stroke="#2d2d2d" stroke-width="1.4"/><rect x="6.4" y="9.6" width="3.2" height="4.8" fill="#3a3a3a"/></svg>
<div class="abs" style="left:1320px;top:110px;width:1px;height:20px;background:#8591a8"></div>
<svg class="abs" style="left:1330px;top:111px" width="16" height="17" viewBox="0 0 16 17"><circle cx="9.2" cy="10.8" r="4.5" fill="none" stroke="#2d2d2d" stroke-width="1.3"/><path d="M9.2 8V11.2H11.8" fill="none" stroke="#2d2d2d" stroke-width="1.2"/><path d="M1.4 2H6L3.7 4.8Z" fill="#2d2d2d"/><path d="M3.7 4.6V6.4" stroke="#2d2d2d" stroke-width="1"/></svg>
<div class="tri" style="left:1351px;top:118px;border-width:3px 3px 0 3px;border-style:solid;border-color:#1e1e1e transparent transparent transparent"></div>
<svg class="abs" style="left:1364px;top:112px" width="14" height="15" viewBox="0 0 14 15"><path d="M13 4.6H3M5.8 1.4L2.2 4.6L5.8 7.8" fill="none" stroke="#2d2d2d" stroke-width="1.9"/><path d="M1.4 10.4H11.4M8.6 7.2L12.2 10.4L8.6 13.6" fill="none" stroke="#2d2d2d" stroke-width="1.9"/></svg>
<svg class="abs" style="left:1387px;top:113px" width="14" height="14" viewBox="0 0 14 14"><path d="M5 2.6V1.5H11.6V7.5H10.4" fill="none" stroke="#2d2d2d" stroke-width="1.1"/><path d="M3 4.8V3.6H9.8V9.6H8.6" fill="none" stroke="#2d2d2d" stroke-width="1.1"/><rect x="1.2" y="5.6" width="6.8" height="5.8" fill="none" stroke="#2d2d2d" stroke-width="1.4"/><path d="M2.8 8.5H6.4" stroke="#2d2d2d" stroke-width="1.3"/></svg>
<svg class="abs" style="left:1407px;top:112px" width="16" height="16" viewBox="0 0 16 16"><path d="M2 11.4V1.6H8.6L9.6 2.6" fill="none" stroke="#2d2d2d" stroke-width="1.3"/><path d="M5 14.2V4.4H11L14.2 7.4V14.2H5Z" fill="none" stroke="#2d2d2d" stroke-width="1.4"/><path d="M10.6 4.6V7.6H14" fill="none" stroke="#2d2d2d" stroke-width="1.1"/><path d="M7 9.5H12M7 11.5H12" stroke="#2d2d2d" stroke-width="1.1"/></svg>
<div class="abs" style="left:1429px;top:110px;width:1px;height:20px;background:#8591a8"></div>
<svg class="abs" style="left:1438px;top:115px" width="14" height="10" viewBox="0 0 14 10"><path d="M5 1.2L1.6 4.8L5 8.4M9 1.2L12.4 4.8L9 8.4" fill="none" stroke="#2d2d2d" stroke-width="1.7"/></svg>
<svg class="abs" style="left:1459px;top:113px" width="15" height="15" viewBox="0 0 15 15"><path d="M2.4 12.6L8 7" stroke="#2d2d2d" stroke-width="3.2" stroke-linecap="round"/><path d="M12.4 1.2L10 3.8L11.2 5.2L13.8 3Q14.8 6 12.6 7.8Q10.4 9.2 8.2 8Q6.2 6.2 7 3.8Q8.4 0.6 12.4 1.2Z" fill="#2d2d2d"/></svg>
<div class="abs" style="left:1478px;top:108px;width:22px;height:24px;background:#fff0a8;border:1px solid #ecd184"></div>
<svg class="abs" style="left:1481px;top:117px" width="16" height="6" viewBox="0 0 16 6"><path d="M1 4.5H15" stroke="#1e1e1e" stroke-width="1.6"/><rect x="7" y="1" width="8" height="3.6" fill="#1e1e1e"/></svg>
<!-- search -->
<div class="abs" style="left:1248px;top:135px;width:344px;height:19px;background:#fcfcfc"></div>
<div class="t" style="left:1252px;top:137px;color:#6d6d6d"><span class="f"><span class="r j" style="transform:scaleX(0.677);margin-right:-29.19px">ソリューション</span><span class="r" style="transform:scaleX(1.082);margin-right:0.27px"> </span><span class="r j" style="transform:scaleX(0.677);margin-right:-33.33px">エクスプローラー</span><span class="r" style="transform:scaleX(1.082);margin-right:0.27px"> </span><span class="r j" style="transform:scaleX(0.677);margin-right:-4.18px">の</span><span class="r jk" style="transform:scaleX(0.922);margin-right:-1.88px">検索</span><span class="r" style="transform:scaleX(1.082);margin-right:0.27px"> </span><span class="r" style="transform:scaleX(0.922);margin-right:-2.90px">(Ctrl+:)</span></span></div>
<svg class="abs" style="left:1564px;top:137px" width="15" height="15" viewBox="0 0 15 15"><circle cx="9.3" cy="5.3" r="3.6" fill="none" stroke="#5a5a5a" stroke-width="1.8"/><path d="M6.6 8L1.6 13" stroke="#5a5a5a" stroke-width="2.4" stroke-linecap="round"/></svg>
<div class="tri" style="left:1583px;top:143px;border-width:3px 3px 0 3px;border-style:solid;border-color:#6a6a6a transparent transparent transparent"></div>
<!-- tree -->
<div class="abs" style="left:1247px;top:178px;width:346px;height:18px;background:#ccceDb"></div>
<div id="tree"><svg class="abs" style="left:1259px;top:160px" width="16" height="16" viewBox="0 0 16 16"><path d="M4 6V3H14.5V12.5H10" fill="none" stroke="#2d2d2d" stroke-width="1"/><rect x="1.5" y="2" width="13.5" height="2.6" fill="#2d2d2d"/><path d="M7.4 7L9 7.8V14L7.4 14.8L3.8 11.8L2.2 13L1 12.4V9.4L2.2 8.8L3.8 10Z M7.4 9.4L5.4 10.9L7.4 12.4Z M2.2 10V11.8L3.2 10.9Z" fill="#68217a" fill-rule="evenodd"/></svg>
<div class="t" style="left:1280px;top:161px;color:#1e1e1e"><span class="f"><span class="r j" style="transform:scaleX(0.681);margin-right:-28.84px">ソリューション</span><span class="r" style="transform:scaleX(1.088);margin-right:0.29px"> </span><span class="r" style="transform:scaleX(0.927);margin-right:-5.99px">'opencvsample'</span><span class="r" style="transform:scaleX(1.088);margin-right:0.29px"> </span><span class="r" style="transform:scaleX(0.927);margin-right:-0.78px">(1</span><span class="r" style="transform:scaleX(1.088);margin-right:0.29px"> </span><span class="r j" style="transform:scaleX(0.681);margin-right:-24.79px">プロジェクト</span><span class="r" style="transform:scaleX(0.927);margin-right:-0.29px">)</span></span></div>
<svg class="abs" style="left:1257px;top:183px" width="8" height="8" viewBox="0 0 8 8"><path d="M6.6 0.6V6.6H0.6Z" fill="#1e1e1e"/></svg>
<svg class="abs" style="left:1277px;top:179px" width="16" height="16" viewBox="0 0 16 16"><rect x="1" y="2" width="14.4" height="12.4" fill="#fff" stroke="#8a5aa0" stroke-width="1"/><path d="M3 5.4h2v-2h2v2h2v2h-2v2h-2v-2h-2z M7 8.4h2v-1h2v1.6h2v2h-2v2h-2v-2h-2z" fill="#1e1e1e"/></svg>
<div class="t" style="left:1298px;top:179px;color:#1e1e1e"><span class="f"><span class="r" style="transform:scaleX(0.995);margin-right:-0.39px">opencvsample</span></span></div>
<svg class="abs" style="left:1275px;top:201px" width="8" height="8" viewBox="0 0 8 8"><path d="M6.6 0.6V6.6H0.6Z" fill="#1e1e1e"/></svg>
<svg class="abs" style="left:1295px;top:197px" width="16" height="16" viewBox="0 0 16 16"><path d="M2.8 10V4.6H7.6L8.6 3.4H14.4V12.4H7" fill="#fff" stroke="#dcb67a" stroke-width="1.3"/><path d="M6.4 12.8L8.8 8H15V12.8Z" fill="#dcb67a"/><path d="M0.6 9.8H5.6L3.6 12V14.6L2.6 14V12Z" fill="#2d2d2d"/></svg>
<div class="t" style="left:1316px;top:197px;color:#1e1e1e"><span class="f"><span class="r j" style="transform:scaleX(0.640);margin-right:-13.77px">ソース</span><span class="r" style="transform:scaleX(1.022);margin-right:0.07px"> </span><span class="r j" style="transform:scaleX(0.640);margin-right:-18.67px">ファイル</span></span></div>
<svg class="abs" style="left:1293px;top:217px" width="7" height="11" viewBox="0 0 7 11"><path d="M1 1.2L5.4 5.5L1 9.8Z" fill="none" stroke="#1e1e1e" stroke-width="1.1"/></svg>
<svg class="abs" style="left:1314px;top:214px" width="16" height="16" viewBox="0 0 16 16"><path d="M1.6 7.5H7.4M4.5 4.6V10.4" stroke="#9b4f96" stroke-width="2"/><path d="M8 8.5H13.4M10.7 5.8V11.2" stroke="#9b4f96" stroke-width="2"/></svg>
<div class="t" style="left:1334px;top:215px;color:#1e1e1e"><span class="f"><span class="r" style="transform:scaleX(0.989);margin-right:-1.06px">opencvsample.cpp</span></span></div>
<svg class="abs" style="left:1314px;top:232px" width="16" height="16" viewBox="0 0 16 16"><path d="M1.6 7.5H7.4M4.5 4.6V10.4" stroke="#9b4f96" stroke-width="2"/><path d="M8 8.5H13.4M10.7 5.8V11.2" stroke="#9b4f96" stroke-width="2"/></svg>
<div class="t" style="left:1334px;top:233px;color:#1e1e1e"><span class="f"><span class="r" style="transform:scaleX(1.005);margin-right:0.30px">stdafx.cpp</span></span></div>
<svg class="abs" style="left:1275px;top:255px" width="8" height="8" viewBox="0 0 8 8"><path d="M6.6 0.6V6.6H0.6Z" fill="#1e1e1e"/></svg>
<svg class="abs" style="left:1295px;top:251px" width="16" height="16" viewBox="0 0 16 16"><path d="M2.8 10V4.6H7.6L8.6 3.4H14.4V12.4H7" fill="#fff" stroke="#dcb67a" stroke-width="1.3"/><path d="M6.4 12.8L8.8 8H15V12.8Z" fill="#dcb67a"/><path d="M0.6 9.8H5.6L3.6 12V14.6L2.6 14V12Z" fill="#2d2d2d"/></svg>
<div class="t" style="left:1316px;top:251px;color:#1e1e1e"><span class="f"><span class="r j" style="transform:scaleX(0.633);margin-right:-19.00px">ヘッダー</span><span class="r" style="transform:scaleX(1.011);margin-right:0.04px"> </span><span class="r j" style="transform:scaleX(0.633);margin-right:-19.00px">ファイル</span></span></div>
<svg class="abs" style="left:1314px;top:268px" width="16" height="16" viewBox="0 0 16 16"><path d="M2.5 2.5H8.5L11.5 5.5V14H2.5Z" fill="#fff" stroke="#3a3a3a" stroke-width="1.1"/><path d="M8.5 2.5V5.5H11.5" fill="none" stroke="#3a3a3a"/><path d="M5 6.6V12M5 9.4H8.2V12" fill="none" stroke="#9b4f96" stroke-width="1.5"/></svg>
<div class="t" style="left:1334px;top:269px;color:#1e1e1e"><span class="f"><span class="r" style="transform:scaleX(0.975);margin-right:-1.03px">stdafx.h</span></span></div>
<svg class="abs" style="left:1314px;top:286px" width="16" height="16" viewBox="0 0 16 16"><path d="M2.5 2.5H8.5L11.5 5.5V14H2.5Z" fill="#fff" stroke="#3a3a3a" stroke-width="1.1"/><path d="M8.5 2.5V5.5H11.5" fill="none" stroke="#3a3a3a"/><path d="M5 6.6V12M5 9.4H8.2V12" fill="none" stroke="#9b4f96" stroke-width="1.5"/></svg>
<div class="t" style="left:1334px;top:287px;color:#1e1e1e"><span class="f"><span class="r" style="transform:scaleX(0.970);margin-right:-1.70px">targetver.h</span></span></div>
<svg class="abs" style="left:1295px;top:305px" width="16" height="16" viewBox="0 0 16 16"><path d="M3 4H8L9 3H15V13H3Z" fill="#dcb67a"/><path d="M9.4 4.2H14" stroke="#f2dfb8" stroke-width="1"/><rect x="0" y="9" width="6.4" height="6.4" fill="#fff"/><path d="M0.6 9.8H5.6L3.6 12V14.6L2.6 14V12Z" fill="#2d2d2d"/></svg>
<div class="t" style="left:1316px;top:305px;color:#1e1e1e"><span class="f"><span class="r j" style="transform:scaleX(0.637);margin-right:-18.58px">リソース</span><span class="r" style="transform:scaleX(1.017);margin-right:0.06px"> </span><span class="r j" style="transform:scaleX(0.637);margin-right:-18.81px">ファイル</span></span></div>
<svg class="abs" style="left:1275px;top:325px" width="7" height="11" viewBox="0 0 7 11"><path d="M1 1.2L5.4 5.5L1 9.8Z" fill="none" stroke="#1e1e1e" stroke-width="1.1"/></svg>
<svg class="abs" style="left:1295px;top:323px" width="16" height="16" viewBox="0 0 16 16"><path d="M2 4H8L9 3H15V13H2Z" fill="#dcb67a"/><path d="M9.4 4.2H14" stroke="#f2dfb8" stroke-width="1"/><rect x="8.2" y="8.6" width="6.2" height="6.2" fill="#fff" stroke="#1ba1e2" stroke-width="1.3"/><path d="M10 13L12.6 10.4M10.4 10.4H12.6V12.6" fill="none" stroke="#1ba1e2" stroke-width="1.1"/></svg>
<div class="t" style="left:1316px;top:323px;color:#1e1e1e"><span class="f"><span class="r jk" style="transform:scaleX(0.986);margin-right:-1.02px">外部依存関係</span></span></div>
<svg class="abs" style="left:1275px;top:343px" width="7" height="11" viewBox="0 0 7 11"><path d="M1 1.2L5.4 5.5L1 9.8Z" fill="none" stroke="#1e1e1e" stroke-width="1.1"/></svg>
<svg class="abs" style="left:1295px;top:340px" width="16" height="16" viewBox="0 0 16 16"><rect x="1" y="5.6" width="4.6" height="4.6" fill="#3a3a3a"/><rect x="6.4" y="7.2" width="2" height="1.6" fill="#3a3a3a"/><rect x="9" y="4.4" width="6" height="7" fill="#3a3a3a"/></svg>
<div class="t" style="left:1316px;top:341px;color:#1e1e1e"><span class="f"><span class="r jk" style="transform:scaleX(0.958);margin-right:-1.02px">参照</span></span></div>
<svg class="abs" style="left:1295px;top:359px" width="16" height="16" viewBox="0 0 16 16"><path d="M3.5 1.5H9.5L12.5 4.5V13.5H3.5Z" fill="#fff" stroke="#2d2d2d"/><path d="M9.5 1.5V4.5H12.5" fill="none" stroke="#2d2d2d"/><path d="M5.5 6.5H10.5M5.5 8.5H10.5M5.5 10.5H10.5" stroke="#2d2d2d"/></svg>
<div class="t" style="left:1316px;top:359px;color:#1e1e1e"><span class="f"><span class="r" style="transform:scaleX(0.978);margin-right:-1.36px">ReadMe.txt</span></span></div></div>
<!-- tabs -->
<div class="abs" style="left:1246px;top:493px;width:348px;height:26px;background:#35496a"></div>
<div class="abs" style="left:1247px;top:493px;width:141px;height:20px;background:#fff"></div>
<div class="abs" style="left:1388px;top:493px;width:170px;height:20px;background:#4d6082"></div>
<div class="t" style="left:1252px;top:495px;color:#1e1e1e"><span class="f"><span class="r j" style="transform:scaleX(0.658);margin-right:-30.90px">ソリューション</span><span class="r" style="transform:scaleX(1.051);margin-right:0.17px"> </span><span class="r j" style="transform:scaleX(0.658);margin-right:-35.29px">エクスプローラー</span></span></div>
<div class="t" style="left:1394px;top:495px;color:#fff"><span class="f"><span class="r j" style="transform:scaleX(0.660);margin-right:-13.10px">チーム</span><span class="r" style="transform:scaleX(1.053);margin-right:0.18px"> </span><span class="r j" style="transform:scaleX(0.660);margin-right:-35.15px">エクスプローラー</span></span></div>
<div class="t" style="left:1501px;top:495px;color:#fff"><span class="f"><span class="r j" style="transform:scaleX(0.628);margin-right:-14.36px">クラス</span><span class="r" style="transform:scaleX(1.003);margin-right:0.01px"> </span><span class="r j" style="transform:scaleX(0.628);margin-right:-14.46px">ビュー</span></span></div>
</div>
<!-- PROPERTIES -->
<div id="props">
<div class="abs" style="left:1246px;top:519px;width:348px;height:310px;background:#fff;border:1px solid #8e9bbc"></div>
<div class="abs" style="left:1247px;top:520px;width:346px;height:21px;background:#4d6082"></div>
<div class="t" style="left:1251px;top:523px;color:#fff"><span class="f"><span class="r j" style="transform:scaleX(0.703);margin-right:-19.00px">プロパティ</span></span></div>
<div class="tri" style="left:1545px;top:528px;border-width:4px 4px 0 4px;border-style:solid;border-color:#ced4e3 transparent transparent transparent"></div>
<svg class="abs" style="left:1561px;top:524px" width="10" height="12" viewBox="0 0 10 12"><path d="M2.5 1V8M2.5 1.5H7M0.5 7.5H9M4.5 8V12" fill="none" stroke="#ced4e3" stroke-width="1"/><path d="M6.5 1V8" stroke="#ced4e3" stroke-width="2"/></svg>
<svg class="abs" style="left:1577px;top:526px" width="10" height="10" viewBox="0 0 10 10"><path d="M1 1L9 9M9 1L1 9" fill="none" stroke="#ced4e3" stroke-width="1.4"/></svg>
<!-- object combo -->
<div class="abs" style="left:1247px;top:541px;width:346px;height:25px;background:#fcfcfc"></div>
<div class="t" style="left:1253px;top:545px;color:#000;font-weight:bold"><span class="f"><span class="r" style="transform:scaleX(0.964);margin-right:-1.02px">main</span></span></div>
<div class="t" style="left:1286px;top:545px;color:#1e1e1e"><span class="f"><span class="r" style="transform:scaleX(0.952);margin-right:-4.39px">VCCodeFunction</span></span></div>
<div class="tri" style="left:1583px;top:552px;border-width:3px 3px 0 3px;border-style:solid;border-color:#1e1e1e transparent transparent transparent"></div>
<!-- toolbar -->
<div class="abs" style="left:1247px;top:566px;width:346px;height:25px;background:#cfd6e5"></div>
<div class="abs" style="left:1250px;top:567px;width:23px;height:22px;background:#fff0a8;border:1px solid #ecd184"></div>
<svg class="abs" style="left:1254px;top:571px" width="15" height="15" viewBox="0 0 15 15"><rect x="0" y="0" width="5" height="5" fill="#2d2d2d"/><path d="M2.5 1.2V3.8M1.2 2.5H3.8" stroke="#e8e0b0" stroke-width="1"/><rect x="0" y="9" width="5" height="5" fill="#2d2d2d"/><path d="M2.5 10.2V12.8M1.2 11.5H3.8" stroke="#e8e0b0" stroke-width="1"/><path d="M6 0.7H11M6 2.7H11M6 4.7H11M6 6.6H11M6 8.5H11M6 11.6H11M6 13.6H11" stroke="#2d2d2d" stroke-width="1"/><path d="M12.2 2.7H14M12.2 4.7H14M12.2 6.6H14M12.2 13.6H14" stroke="#2d2d2d" stroke-width="1"/></svg>
<svg class="abs" style="left:1277px;top:571px" width="16" height="15" viewBox="0 0 16 15"><rect x="0" y="0" width="7" height="6.8" fill="#2d2d2d"/><text x="1" y="5.9" font-family="Liberation Sans, sans-serif" font-size="7" font-weight="bold" fill="#e6e9f2">A</text><text x="0.6" y="14" font-family="Liberation Sans, sans-serif" font-size="7.5" font-weight="bold" fill="#2d2d2d">Z</text><path d="M11 3.4V10.4" stroke="#0046ad" stroke-width="2"/><path d="M8 8L11 11.2L14 8" fill="none" stroke="#0046ad" stroke-width="2"/></svg>
<div class="abs" style="left:1299px;top:569px;width:1px;height:19px;background:#8591a8"></div>
<svg class="abs" style="left:1307px;top:571px" width="13" height="13" viewBox="0 0 15 15"><path d="M2.4 12.6L8 7" stroke="#a9adb8" stroke-width="3.4" stroke-linecap="round"/><path d="M12.4 1.2L10 3.8L11.2 5.2L13.8 3Q14.8 6 12.6 7.8Q10.4 9.2 8.2 8Q6.2 6.2 7 3.8Q8.4 0.6 12.4 1.2Z" fill="#a9adb8"/></svg>
<!-- grid -->
<div class="abs" style="left:1247px;top:591px;width:346px;height:176px;background:#eeeef2"></div>
<div class="abs" style="left:1262px;top:612px;width:313px;height:155px;background:#fff"></div>
<svg class="abs" style="left:1250px;top:597px" width="10" height="10" viewBox="0 0 10 10"><rect x=".6" y=".6" width="8" height="8" fill="#fff" stroke="#111" stroke-width="1.2"/><path d="M2.2 4.6H7" stroke="#111" stroke-width="1.2"/></svg>
<div class="t" style="left:1266px;top:594px;color:#000"><span class="f"><span class="r" style="transform:scaleX(0.970);margin-right:-0.69px">C++</span></span></div>
<div class="abs" style="left:1262px;top:630px;width:313px;height:1px;background:#eeeef2"></div>
<div class="t" style="left:1266px;top:613px;color:#1e1e1e"><span class="f"><span class="r" style="transform:scaleX(0.950);margin-right:-2.02px">(Name)</span></span></div>
<div class="t" style="left:1418px;top:613px;color:#000;font-weight:bold"><span class="f"><span class="r" style="transform:scaleX(0.964);margin-right:-1.02px">main</span></span></div>
<div class="abs" style="left:1262px;top:649px;width:313px;height:1px;background:#eeeef2"></div>
<div class="t" style="left:1266px;top:632px;color:#6d6d6d"><span class="f"><span class="r" style="transform:scaleX(0.982);margin-right:-0.34px">File</span></span></div>
<div class="t" style="left:1418px;top:632px;color:#6d6d6d"><span class="f"><span class="r" style="transform:scaleX(0.943);margin-right:-3.20px">c:¥Users¥'</span><span class="r" style="transform:scaleX(1.107);margin-right:1.42px">    </span><span class="r" style="transform:scaleX(0.943);margin-right:-5.38px">›¥Documents¥Vis</span></span></div>
<div class="abs" style="left:1262px;top:668px;width:313px;height:1px;background:#eeeef2"></div>
<div class="t" style="left:1266px;top:651px;color:#6d6d6d"><span class="f"><span class="r" style="transform:scaleX(0.935);margin-right:-3.36px">FullName</span></span></div>
<div class="t" style="left:1418px;top:651px;color:#6d6d6d"><span class="f"><span class="r" style="transform:scaleX(0.999);margin-right:-0.02px">main</span></span></div>
<div class="abs" style="left:1262px;top:687px;width:313px;height:1px;background:#eeeef2"></div>
<div class="t" style="left:1266px;top:670px;color:#1e1e1e"><span class="f"><span class="r" style="transform:scaleX(0.971);margin-right:-1.36px">IsDefault</span></span></div>
<div class="t" style="left:1418px;top:670px;color:#000;-webkit-text-stroke:.45px #000"><span class="f"><span class="r" style="transform:scaleX(0.852);margin-right:-4.34px">False</span></span></div>
<div class="abs" style="left:1262px;top:706px;width:313px;height:1px;background:#eeeef2"></div>
<div class="t" style="left:1266px;top:689px;color:#1e1e1e"><span class="f"><span class="r" style="transform:scaleX(0.931);margin-right:-3.03px">IsDelete</span></span></div>
<div class="t" style="left:1418px;top:689px;color:#000;-webkit-text-stroke:.45px #000"><span class="f"><span class="r" style="transform:scaleX(0.852);margin-right:-4.34px">False</span></span></div>
<div class="abs" style="left:1262px;top:725px;width:313px;height:1px;background:#eeeef2"></div>
<div class="t" style="left:1266px;top:708px;color:#1e1e1e"><span class="f"><span class="r" style="transform:scaleX(0.934);margin-right:-2.34px">IsFinal</span></span></div>
<div class="t" style="left:1418px;top:708px;color:#000;-webkit-text-stroke:.45px #000"><span class="f"><span class="r" style="transform:scaleX(0.852);margin-right:-4.34px">False</span></span></div>
<div class="abs" style="left:1262px;top:744px;width:313px;height:1px;background:#eeeef2"></div>
<div class="t" style="left:1266px;top:727px;color:#6d6d6d"><span class="f"><span class="r" style="transform:scaleX(0.973);margin-right:-1.38px">IsInjected</span></span></div>
<div class="t" style="left:1418px;top:727px;color:#6d6d6d"><span class="f"><span class="r" style="transform:scaleX(0.852);margin-right:-4.34px">False</span></span></div>
<div class="abs" style="left:1262px;top:763px;width:313px;height:1px;background:#eeeef2"></div>
<div class="t" style="left:1266px;top:746px;color:#1e1e1e"><span class="f"><span class="r" style="transform:scaleX(0.973);margin-right:-1.03px">IsInline</span></span></div>
<div class="t" style="left:1418px;top:746px;color:#000;-webkit-text-stroke:.45px #000"><span class="f"><span class="r" style="transform:scaleX(0.852);margin-right:-4.34px">False</span></span></div>
<div class="abs" style="left:1414px;top:612px;width:1px;height:155px;background:#eeeef2"></div>
<!-- grid scrollbar -->
<div class="abs" style="left:1575px;top:592px;width:17px;height:175px;background:#e8e8ec"></div>
<div class="tri" style="left:1579px;top:597px;border-width:0 4.5px 5px 4.5px;border-style:solid;border-color:transparent transparent #868999 transparent"></div>
<div class="abs" style="left:1579px;top:608px;width:9px;height:98px;background:#c2c3c9"></div>
<div class="tri" style="left:1579px;top:754px;border-width:5px 4.5px 0 4.5px;border-style:solid;border-color:#868999 transparent transparent transparent"></div>
<!-- description -->
<div class="t" style="left:1253px;top:773px;color:#000"><span class="f"><span class="r" style="transform:scaleX(0.970);margin-right:-0.69px">C++</span></span></div>
</div>
</body>
</html>
